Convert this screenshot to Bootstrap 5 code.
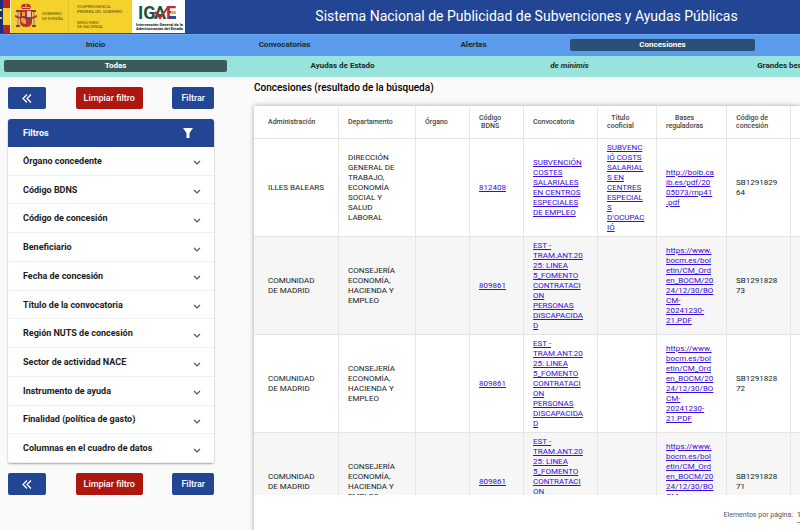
<!DOCTYPE html>
<html lang="es">
<head>
<meta charset="utf-8">
<meta name="viewport" content="width=device-width, initial-scale=1">
<title>Sistema Nacional de Publicidad de Subvenciones y Ayudas Públicas</title>
<link href="https://cdn.jsdelivr.net/npm/bootstrap@5.3.0/dist/css/bootstrap.min.css" rel="stylesheet">
<style>
body{font-family:Roboto,"Liberation Sans",sans-serif;font-size:9px;line-height:10px;background:#fafafa;color:#1b1b1b}
a{color:inherit;text-decoration:none}
.site-head{background:#224694}
.site-head h1{font-size:14px;line-height:32px;color:#fff;font-weight:400;padding-left:68px}
.site-head svg,.act svg,.flt-head svg,.flt svg{display:block}
.menu-main{background:#5a9bec;height:22px;border-top:1px solid #6ea8f0;padding:0 2px 1px}
.menu-sub{background:#98e4dd;height:21px;padding:0 2px 1px}
.menu-main a,.menu-sub a{font-size:8px;font-weight:700;line-height:12px;text-align:center;border-radius:2px;margin:0 2px;flex:none;color:#1a2a2c}
.menu-main{padding-left:1px}
.menu-main a{width:185px}
.menu-sub a{width:223px}
.menu-main a.on{background:#2b4f76;color:#fff}
.menu-sub a.on{background:#3d5a5b;color:#fff}
.side{width:206px;flex:none;padding-top:10px}
.act{border:0;border-radius:2px;height:22px;padding:0 9px;font-weight:500;color:#fff;background:#224694}
.act.fold{width:38px}
.act.wipe{background:#ae1610;padding:0 8px}
.panel{border-radius:3px;overflow:hidden;box-shadow:0 1px 2px rgba(0,0,0,.35);background:#fff;margin:10px 0}
.flt-head{background:#224694;color:#fff;height:28px;font-size:9px;line-height:10px;font-weight:700;padding:0 20px 0 15px}
.flts{height:316px}
.flt{border:0;border-bottom:1px solid #f0f0f0;background:#fff;font-weight:700;color:#1b1b1b;flex:1 1 0;padding:0 13px 0 15px}
.flt svg{margin-top:5px}
.main-col{margin-left:32px;padding:5px 0 0 8px}
.main-col h2{font-size:10px;line-height:12px;font-weight:500;color:#000;margin:0 0 12px}
.sheet{background:#fff;box-shadow:0 0 5px rgba(0,0,0,.35)}
.scroller{height:389px;overflow:hidden}
.grid{table-layout:fixed;width:620px;font-size:8px;line-height:10px;border-collapse:separate;border-spacing:0}
.grid th{height:33px;font-size:7px;line-height:8px;font-weight:500;color:#444}
.grid th,.grid td{padding:0 0 0 9px;vertical-align:middle;border-right:1px solid #e6e6e6;border-bottom:1px solid #e4e4e4;white-space:nowrap}
.grid tr>:first-child{padding-left:14px}
.grid th span{display:inline-block;text-align:center}
.grid td{height:98px}
.grid td a{color:#3a0be0;text-decoration:underline}
.grid tbody tr:nth-child(even) td{background:#f6f6f6}
.c84{width:85px}.c77{width:77px}.c54{width:54px}.c74{width:74px}.c60{width:59px}.c70{width:70px}.c64{width:64px}
.pager{font-size:7px;color:#555;height:40px}
.pager select{border:0;border-bottom:1px solid #999;border-radius:0;font-size:7px;width:3px;flex:none;height:16px;background:#fff;color:#333;appearance:none;padding:0}
</style>
<script src="https://cdn.jsdelivr.net/npm/bootstrap@5.3.0/dist/js/bootstrap.bundle.min.js"></script>
</head>
<body class="overflow-hidden">
<header class="site-head d-flex">
<a href="#" aria-label="Gobierno de España, IGAE">
<svg width="185" height="34" viewBox="0 0 185 34">
<rect width="132" height="33" fill="#f4d22b"/>
<path fill="#182e78" d="M0 0h3v33H0z"/><path d="M0 9h2v2H0zM0 17h2v2H0z" fill="#f4d22b"/>
<path fill="#b8202c" d="M3 0h7v8H3zM3 25h7v8H3z"/><path fill="#fff3b0" d="M10 0h1v33h-1z"/>
<path d="M21 7q1-4 5-3 4-1 5 3l-1 2h-8z" fill="#b5322a"/><path d="M25.500 3h1v5h-1zM22 7h8v1h-8z" fill="#e9b62c"/>
<path d="M17 12h2v13h-2zM33 12h2v13h-2z" fill="#a9a090"/><path d="M16 10h4v2h-4zM32 10h4v2h-4zM16 25h4v2h-4zM32 25h4v2h-4z" fill="#a8342a"/>
<path d="M15 15l5 2v2l-5-2zM32 17l5-2v2l-5 2z" fill="#b5322a"/>
<path d="M20 10h12v12q0 5-6 5t-6-5z" fill="#b5322a"/><path d="M27 11h4v6h-4z" fill="#dccab8"/><path d="M21 18h5v6q-4 0-5-3zM22 12h3v4h-3z" fill="#e4a62c"/><circle cx="26" cy="18" r="1.500" fill="#31508e"/>
<path d="M68.500 0v33" stroke="#e3c32a"/>
<g font-family="Roboto,sans-serif" font-size="4" fill="#5b4c14"><text x="42" y="15">GOBIERNO</text><text x="42" y="20">DE ESPAÑA</text><text x="77" y="8">VICEPRESIDENCIA</text><text x="77" y="13">PRIMERA DEL GOBIERNO</text><text x="77" y="24">MINISTERIO</text><text x="77" y="28">DE HACIENDA</text></g>
<rect x="132" width="53" height="33" fill="#fff"/>
<g font-family="Roboto,sans-serif" font-weight="700" font-size="18"><text x="138" y="19" fill="#1d5638">IG</text><text x="154" y="19" fill="#1d5638">A</text><text x="166" y="19" fill="#c32a2e">E</text></g>
<path d="M155 12l5 6 8-11" fill="none" stroke="#c8242c" stroke-width="2"/><path d="M171 11h5v3h-5z" fill="#e9b62c"/><path d="M169 16h7v3h-7z" fill="#2b4f8e"/>
<g font-family="Roboto,sans-serif" font-weight="700" font-size="4" fill="#111"><text x="136" y="26">Intervención General de la</text><text x="136" y="30">Administración del Estado</text></g>
</svg></a>
<h1 class="flex-fill text-center m-0">Sistema Nacional de Publicidad de Subvenciones y Ayudas Públicas</h1>
</header>
<nav class="menu-main d-flex align-items-center overflow-hidden" aria-label="Principal"><a href="#">Inicio</a><a href="#">Convocatorias</a><a href="#">Alertas</a><a href="#" class="on">Concesiones</a></nav>
<nav class="menu-sub d-flex align-items-center overflow-hidden" aria-label="Concesiones"><a href="#" class="on">Todas</a><a href="#">Ayudas de Estado</a><a href="#" class="fst-italic">de minimis</a><a href="#">Grandes beneficiarios</a></nav>
<svg class="d-none"><symbol id="dn" viewBox="0 0 8 6"><path d="M1 1l3 3 3-3" fill="none" stroke="#555" stroke-width="1.200"/></symbol><symbol id="fold" viewBox="0 0 10 9"><path d="M5 .5l-4 4 4 4M9 .5l-4 4 4 4" fill="none" stroke="#fff" stroke-width="1.300"/></symbol></svg>
<div class="d-flex">
<aside class="side ms-2">
<div class="d-flex justify-content-between"><button class="act fold d-flex align-items-center justify-content-center" aria-label="Plegar filtros"><svg width="10" height="9"><use href="#fold"/></svg></button><button class="act wipe">Limpiar filtro</button><button class="act">Filtrar</button></div>
<section class="panel">
<div class="flt-head d-flex align-items-center justify-content-between">Filtros<svg width="12" height="12" viewBox="0 0 12 12"><path d="M1 1h10L7.500 6v5h-3V6z" fill="#fff"/></svg></div>
<div class="flts d-flex flex-column">
<button class="flt d-flex align-items-center justify-content-between">Órgano concedente<svg width="8" height="6"><use href="#dn"/></svg></button>
<button class="flt d-flex align-items-center justify-content-between">Código BDNS<svg width="8" height="6"><use href="#dn"/></svg></button>
<button class="flt d-flex align-items-center justify-content-between">Código de concesión<svg width="8" height="6"><use href="#dn"/></svg></button>
<button class="flt d-flex align-items-center justify-content-between">Beneficiario<svg width="8" height="6"><use href="#dn"/></svg></button>
<button class="flt d-flex align-items-center justify-content-between">Fecha de concesión<svg width="8" height="6"><use href="#dn"/></svg></button>
<button class="flt d-flex align-items-center justify-content-between">Título de la convocatoria<svg width="8" height="6"><use href="#dn"/></svg></button>
<button class="flt d-flex align-items-center justify-content-between">Región NUTS de concesión<svg width="8" height="6"><use href="#dn"/></svg></button>
<button class="flt d-flex align-items-center justify-content-between">Sector de actividad NACE<svg width="8" height="6"><use href="#dn"/></svg></button>
<button class="flt d-flex align-items-center justify-content-between">Instrumento de ayuda<svg width="8" height="6"><use href="#dn"/></svg></button>
<button class="flt d-flex align-items-center justify-content-between">Finalidad (política de gasto)<svg width="8" height="6"><use href="#dn"/></svg></button>
<button class="flt d-flex align-items-center justify-content-between">Columnas en el cuadro de datos<svg width="8" height="6"><use href="#dn"/></svg></button>
</div>
</section>
<div class="d-flex justify-content-between"><button class="act fold d-flex align-items-center justify-content-center" aria-label="Plegar filtros"><svg width="10" height="9"><use href="#fold"/></svg></button><button class="act wipe">Limpiar filtro</button><button class="act">Filtrar</button></div>
</aside>
<main class="main-col flex-fill overflow-hidden">
<h2>Concesiones (resultado de la búsqueda)</h2>
<div class="sheet">
<div class="scroller">
<table class="grid">
<colgroup><col class="c84"><col class="c77"><col class="c54"><col class="c54"><col class="c74"><col class="c60"><col class="c70"><col class="c64"><col></colgroup>
<thead><tr><th>Administración</th><th>Departamento</th><th>Órgano</th><th><span>Código<br>BDNS</span></th><th>Convocatoria</th><th><span>Título<br>cooficial</span></th><th><span>Bases<br>reguladoras</span></th><th><span>Código de<br>concesión</span></th><th></th></tr></thead>
<tbody>
<tr><td>ILLES BALEARS</td><td>DIRECCIÓN<br>GENERAL DE<br>TRABAJO,<br>ECONOMÍA<br>SOCIAL Y<br>SALUD<br>LABORAL</td><td></td><td><a href="#">812408</a></td><td><a href="#">SUBVENCIÓN<br>COSTES<br>SALARIALES<br>EN CENTROS<br>ESPECIALES<br>DE EMPLEO</a></td><td><a href="#">SUBVENC<br>IÓ COSTS<br>SALARIAL<br>S EN<br>CENTRES<br>ESPECIAL<br>S<br>D'OCUPAC<br>IÓ</a></td><td><a href="#">http://boib.ca<br>ib.es/pdf/20<br>05073/mp41<br>.pdf</a></td><td>SB1291829<br>64</td><td></td></tr>
<tr><td>COMUNIDAD<br>DE MADRID</td><td>CONSEJERÍA<br>ECONOMÍA,<br>HACIENDA Y<br>EMPLEO</td><td></td><td><a href="#">809861</a></td><td><a href="#">EST -<br>TRAM.ANT.20<br>25: LINEA<br>5_FOMENTO<br>CONTRATACI<br>ON<br>PERSONAS<br>DISCAPACIDA<br>D</a></td><td></td><td><a href="#">https://www.<br>bocm.es/bol<br>etin/CM_Ord<br>en_BOCM/20<br>24/12/30/BO<br>CM-<br>20241230-<br>21.PDF</a></td><td>SB1291828<br>73</td><td></td></tr>
<tr><td>COMUNIDAD<br>DE MADRID</td><td>CONSEJERÍA<br>ECONOMÍA,<br>HACIENDA Y<br>EMPLEO</td><td></td><td><a href="#">809861</a></td><td><a href="#">EST -<br>TRAM.ANT.20<br>25: LINEA<br>5_FOMENTO<br>CONTRATACI<br>ON<br>PERSONAS<br>DISCAPACIDA<br>D</a></td><td></td><td><a href="#">https://www.<br>bocm.es/bol<br>etin/CM_Ord<br>en_BOCM/20<br>24/12/30/BO<br>CM-<br>20241230-<br>21.PDF</a></td><td>SB1291828<br>72</td><td></td></tr>
<tr><td>COMUNIDAD<br>DE MADRID</td><td>CONSEJERÍA<br>ECONOMÍA,<br>HACIENDA Y<br>EMPLEO</td><td></td><td><a href="#">809861</a></td><td><a href="#">EST -<br>TRAM.ANT.20<br>25: LINEA<br>5_FOMENTO<br>CONTRATACI<br>ON<br>PERSONAS<br>DISCAPACIDA<br>D</a></td><td></td><td><a href="#">https://www.<br>bocm.es/bol<br>etin/CM_Ord<br>en_BOCM/20<br>24/12/30/BO<br>CM-<br>20241230-<br>21.PDF</a></td><td>SB1291828<br>71</td><td></td></tr>
</tbody>
</table>
</div>
<div class="pager d-flex align-items-center justify-content-end"><label for="pp" class="me-1">Elementos por página:</label><select id="pp"><option>10</option></select></div>
</div>
</main>
</div>
</body>
</html>
